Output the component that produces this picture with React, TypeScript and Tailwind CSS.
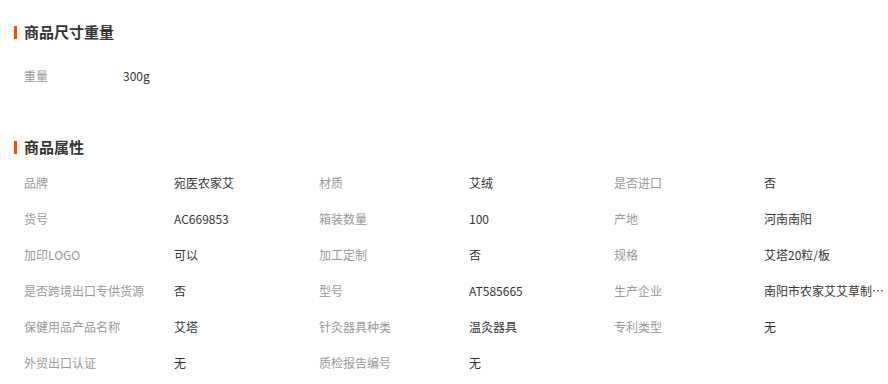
import React from 'react';

const attrs: [string, string][] = [
  ['品牌', '宛医农家艾'],
  ['材质', '艾绒'],
  ['是否进口', '否'],
  ['货号', 'AC669853'],
  ['箱装数量', '100'],
  ['产地', '河南南阳'],
  ['加印LOGO', '可以'],
  ['加工定制', '否'],
  ['规格', '艾塔20粒/板'],
  ['是否跨境出口专供货源', '否'],
  ['型号', 'AT585665'],
  ['生产企业', '南阳市农家艾艾草制品有限公司'],
  ['保健用品产品名称', '艾塔'],
  ['针灸器具种类', '温灸器具'],
  ['专利类型', '无'],
  ['外贸出口认证', '无'],
  ['质检报告编号', '无'],
];

function Heading({ title }: { title: string }) {
  return (
    <div className="flex items-center h-5">
      <span className="w-[3px] h-[13px] bg-[#ff4a00]" />
      <span className="ml-[7px] text-[15px] font-bold text-[#333]">{title}</span>
    </div>
  );
}

export default function App() {
  return (
    <div className="w-[888px] h-[384px] bg-white overflow-hidden pl-[14px] font-['Microsoft_YaHei','Noto_Sans_CJK_SC',sans-serif]">
      {/* 尺寸重量 */}
      <div className="pt-[22px]">
        <Heading title="商品尺寸重量" />
        <div className="mt-[16px] flex items-center h-9 pl-[10px] text-xs">
          <span className="w-[99px] text-[#999]">重量</span>
          <span className="text-[#333]">300g</span>
        </div>
      </div>

      {/* 属性 */}
      <div className="mt-[43px]">
        <Heading title="商品属性" />
        <div className="mt-[8px] grid grid-cols-[295px_295px_284px] text-xs">
          {attrs.map(([k, v]) => (
            <div key={k} className="flex items-center h-9 pl-[10px]">
              <span className="w-[150px] shrink-0 text-[#999] truncate">{k}</span>
              <span className="w-[122px] text-[#333] truncate">{v}</span>
            </div>
          ))}
        </div>
      </div>
    </div>
  );
}
